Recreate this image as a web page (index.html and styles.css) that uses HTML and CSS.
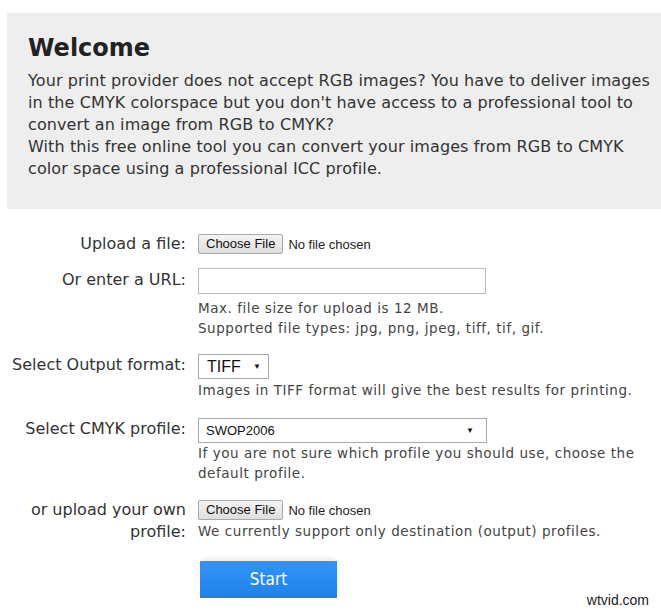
FILE: index.html
```html
<!DOCTYPE html>
<html lang="en">
<head>
    <meta charset="UTF-8">
    <meta name="viewport" content="width=device-width, initial-scale=1.0">
    <title>RGB to CMYK converter</title>
    <link rel="stylesheet" href="styles.css">
</head>
<body>
    <div class="intro">
        <h1>Welcome</h1>
        <p>Your print provider does not accept RGB images? You have to deliver images in the CMYK colorspace but you don't have access to a professional tool to convert an image from RGB to CMYK?<br>With this free online tool you can convert your images from RGB to CMYK color space using a professional ICC profile.</p>
    </div>

    <form class="convert-form">
        <div class="row row-upload">
            <label class="label">Upload a file:</label>
            <div class="field">
                <span class="file"><span class="file-btn">Choose File</span> No file chosen</span>
            </div>
        </div>

        <div class="row row-url">
            <label class="label">Or enter a URL:</label>
            <div class="field">
                <input type="text" class="url-input">
                <p class="hint">Max. file size for upload is 12 MB.<br>Supported file types: jpg, png, jpeg, tiff, tif, gif.</p>
            </div>
        </div>

        <div class="row row-format">
            <label class="label">Select Output format:</label>
            <div class="field">
                <span class="select select-format">TIFF <span class="arrow">&#9660;</span></span>
                <p class="hint">Images in TIFF format will give the best results for printing.</p>
            </div>
        </div>

        <div class="row row-profile">
            <label class="label">Select CMYK profile:</label>
            <div class="field">
                <span class="select select-profile">SWOP2006 <span class="arrow">&#9660;</span></span>
                <p class="hint">If you are not sure which profile you should use, choose the<br>default profile.</p>
            </div>
        </div>

        <div class="row row-own">
            <label class="label">or upload your own profile:</label>
            <div class="field">
                <span class="file"><span class="file-btn">Choose File</span> No file chosen</span>
                <p class="hint">We currently support only destination (output) profiles.</p>
            </div>
        </div>

        <div class="row row-submit">
            <span class="label"></span>
            <div class="field">
                <button type="button" class="start-btn">Start</button>
            </div>
        </div>
    </form>

    <div class="watermark">wtvid.com</div>
</body>
</html>
```

FILE: styles.css
```css
body {
    margin: 0;
    background-color: #ffffff;
    color: #333333;
    font-family: "DejaVu Sans", Verdana, sans-serif;
    position: relative;
    height: 610px;
    overflow: hidden;
}

.intro {
    margin: 13px 0 0 7px;
    padding: 20px 0 28px 21px;
    height: 148px;
    background-color: #eeeeee;
}

.intro h1 {
    margin: 0 0 7px 0;
    font-family: "DejaVu Sans", Tahoma, sans-serif;
    font-size: 24px;
    line-height: 30px;
    font-weight: bold;
    color: #222222;
}

.intro p {
    margin: 0;
    font-family: "DejaVu Sans", Tahoma, sans-serif;
    font-size: 16px;
    line-height: 22px;
    letter-spacing: 0.1px;
    color: #333333;
}

.convert-form {
    padding-top: 24px;
}

.row {
    display: flex;
    align-items: flex-start;
}

.label {
    width: 186px;
    flex-shrink: 0;
    padding-right: 12px;
    text-align: right;
    font-size: 16px;
    line-height: 22px;
    color: #333333;
}

.field {
    flex: 1;
}

.hint {
    margin: 0;
    font-size: 13.5px;
    line-height: 20px;
    color: #444444;
    letter-spacing: 0.55px;
    white-space: nowrap;
}

.file {
    display: inline-flex;
    align-items: center;
    font-family: "Liberation Sans", Arial, sans-serif;
    font-size: 13px;
    color: #222222;
}

.file-btn {
    display: inline-block;
    height: 18px;
    line-height: 18px;
    padding: 0 7px;
    margin-right: 5px;
    border: 1px solid #a9a9a9;
    border-radius: 2px;
    background: linear-gradient(#f4f4f4, #dedede);
    color: #111111;
}

.row-upload {
    height: 35px;
}

.row-upload .label {
    padding-top: 0;
}

.row-upload .field {
    padding-top: 0;
}

.url-input {
    display: block;
    box-sizing: border-box;
    width: 288px;
    height: 26px;
    margin: 0;
    border: 1px solid #bbbbbb;
    background: #ffffff;
}

.row-url .label {
    padding-top: 1px;
}

.row-url .hint {
    padding-top: 4px;
}

.row-format {
    margin-top: 16px;
}

.row-format .label {
    padding-top: 0;
}

.select {
    display: flex;
    align-items: center;
    justify-content: space-between;
    box-sizing: border-box;
    border: 1px solid #aaaaaa;
    background: #ffffff;
    font-family: "Liberation Sans", Arial, sans-serif;
    color: #111111;
}

.select .arrow {
    font-size: 8px;
    color: #111111;
}

.select-format {
    width: 71px;
    height: 25px;
    padding: 0 7px 0 8px;
    font-size: 16px;
}

.row-format .hint {
    padding-top: 1px;
}

.row-profile {
    margin-top: 18px;
}

.row-profile .label {
    padding-top: 0;
}

.select-profile {
    width: 289px;
    height: 25px;
    padding: 0 12px 0 7px;
    font-size: 13px;
}

.row-own {
    margin-top: 16px;
}

.row-own .label {
    line-height: 22px;
    padding-top: 0;
}

.row-own .hint {
    padding-top: 1px;
}

.row-submit {
    margin-top: 18px;
}

.start-btn {
    display: block;
    width: 137px;
    height: 37px;
    margin-left: 2px;
    border: none;
    border-bottom: 2px solid #4b77a8;
    background: linear-gradient(#3593f6, #1f84ee);
    box-shadow: 0 -4px 4px -2px #e6e6e6;
    color: #ffffff;
    font-family: "DejaVu Sans Condensed", Tahoma, sans-serif;
    font-size: 17px;
}

.watermark {
    position: absolute;
    right: 12px;
    bottom: 2px;
    font-family: "Liberation Sans", Arial, sans-serif;
    font-size: 14px;
    color: #222222;
}
```
